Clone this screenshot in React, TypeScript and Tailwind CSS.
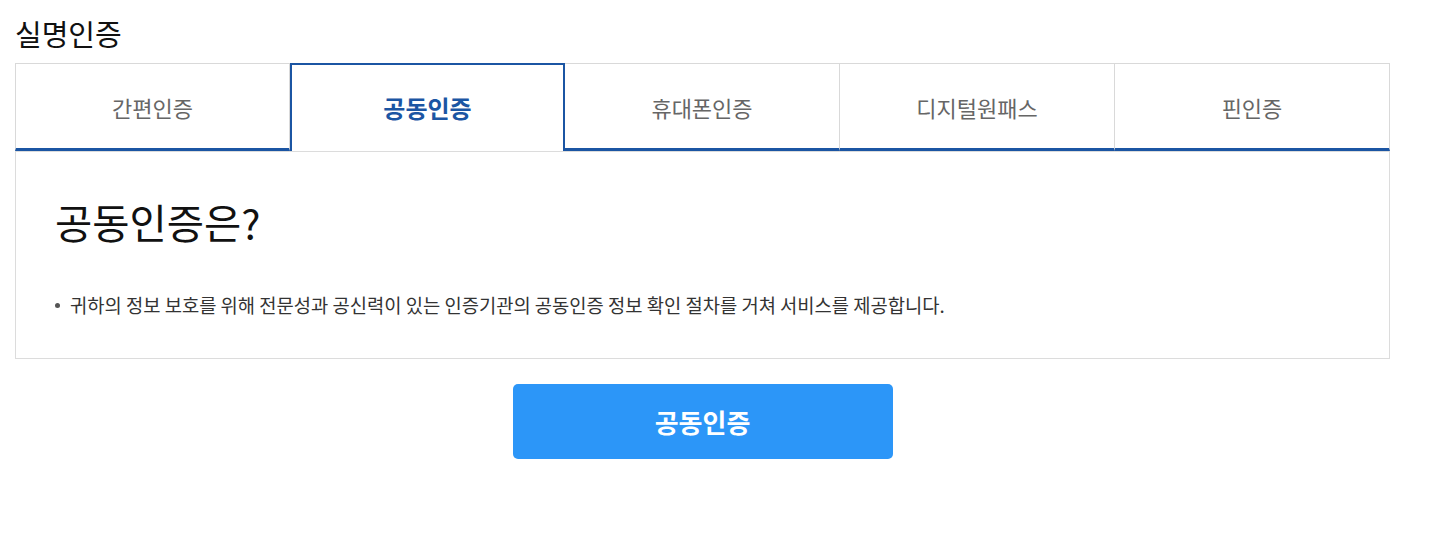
import React from 'react';

const tabs = ['간편인증', '공동인증', '휴대폰인증', '디지털원패스', '핀인증'];
const active = 1;

const App = () => {
  return (
    <div className="min-h-screen bg-white px-[15px] pt-[14px] font-['Noto_Sans_CJK_KR','Noto_Sans',sans-serif]">
      {/* Title */}
      <h2 className="text-[29px] leading-[38px] text-[#111]">실명인증</h2>

      <div className="mt-[11px] w-[1375px]">
        {/* Tabs */}
        <ul className="flex">
          {tabs.map((t, i) =>
            i === active ? (
              <li
                key={t}
                className="flex h-[88px] w-[275px] items-center justify-center border-2 border-b-0 border-[#1b55a3] bg-white text-[24px] font-bold text-[#1b55a3]"
              >
                {t}
              </li>
            ) : (
              <li
                key={t}
                className={`flex h-[88px] w-[275px] items-center justify-center border-t border-r border-b-[3px] border-t-[#d9d9d9] border-r-[#d9d9d9] border-b-[#1b55a3] pt-[2px] text-[22px] text-[#666] ${
                  i === 0 ? 'border-l border-l-[#d9d9d9]' : ''
                }`}
              >
                {t}
              </li>
            )
          )}
        </ul>

        {/* Content */}
        <div className="h-[208px] border border-[#dcdcdc] px-[39px] pt-[46px]">
          <h3 className="text-[40.5px] leading-[48px] text-[#111]">공동인증은?</h3>
          <ul className="mt-[48px]">
            <li className="flex items-center text-[18.75px] leading-[22px] text-[#333]">
              <span className="mr-[10px] inline-block h-[5px] w-[5px] rounded-full bg-[#555]" />
              귀하의 정보 보호를 위해 전문성과 공신력이 있는 인증기관의 공동인증 정보 확인 절차를 거쳐 서비스를 제공합니다.
            </li>
          </ul>
        </div>

        {/* Button */}
        <div className="flex justify-center pt-[25px]">
          <button className="h-[75px] w-[380px] rounded-[5px] bg-[#2c96f8] text-[26px] font-bold text-white">
            공동인증
          </button>
        </div>
      </div>
    </div>
  );
};

export default App;
